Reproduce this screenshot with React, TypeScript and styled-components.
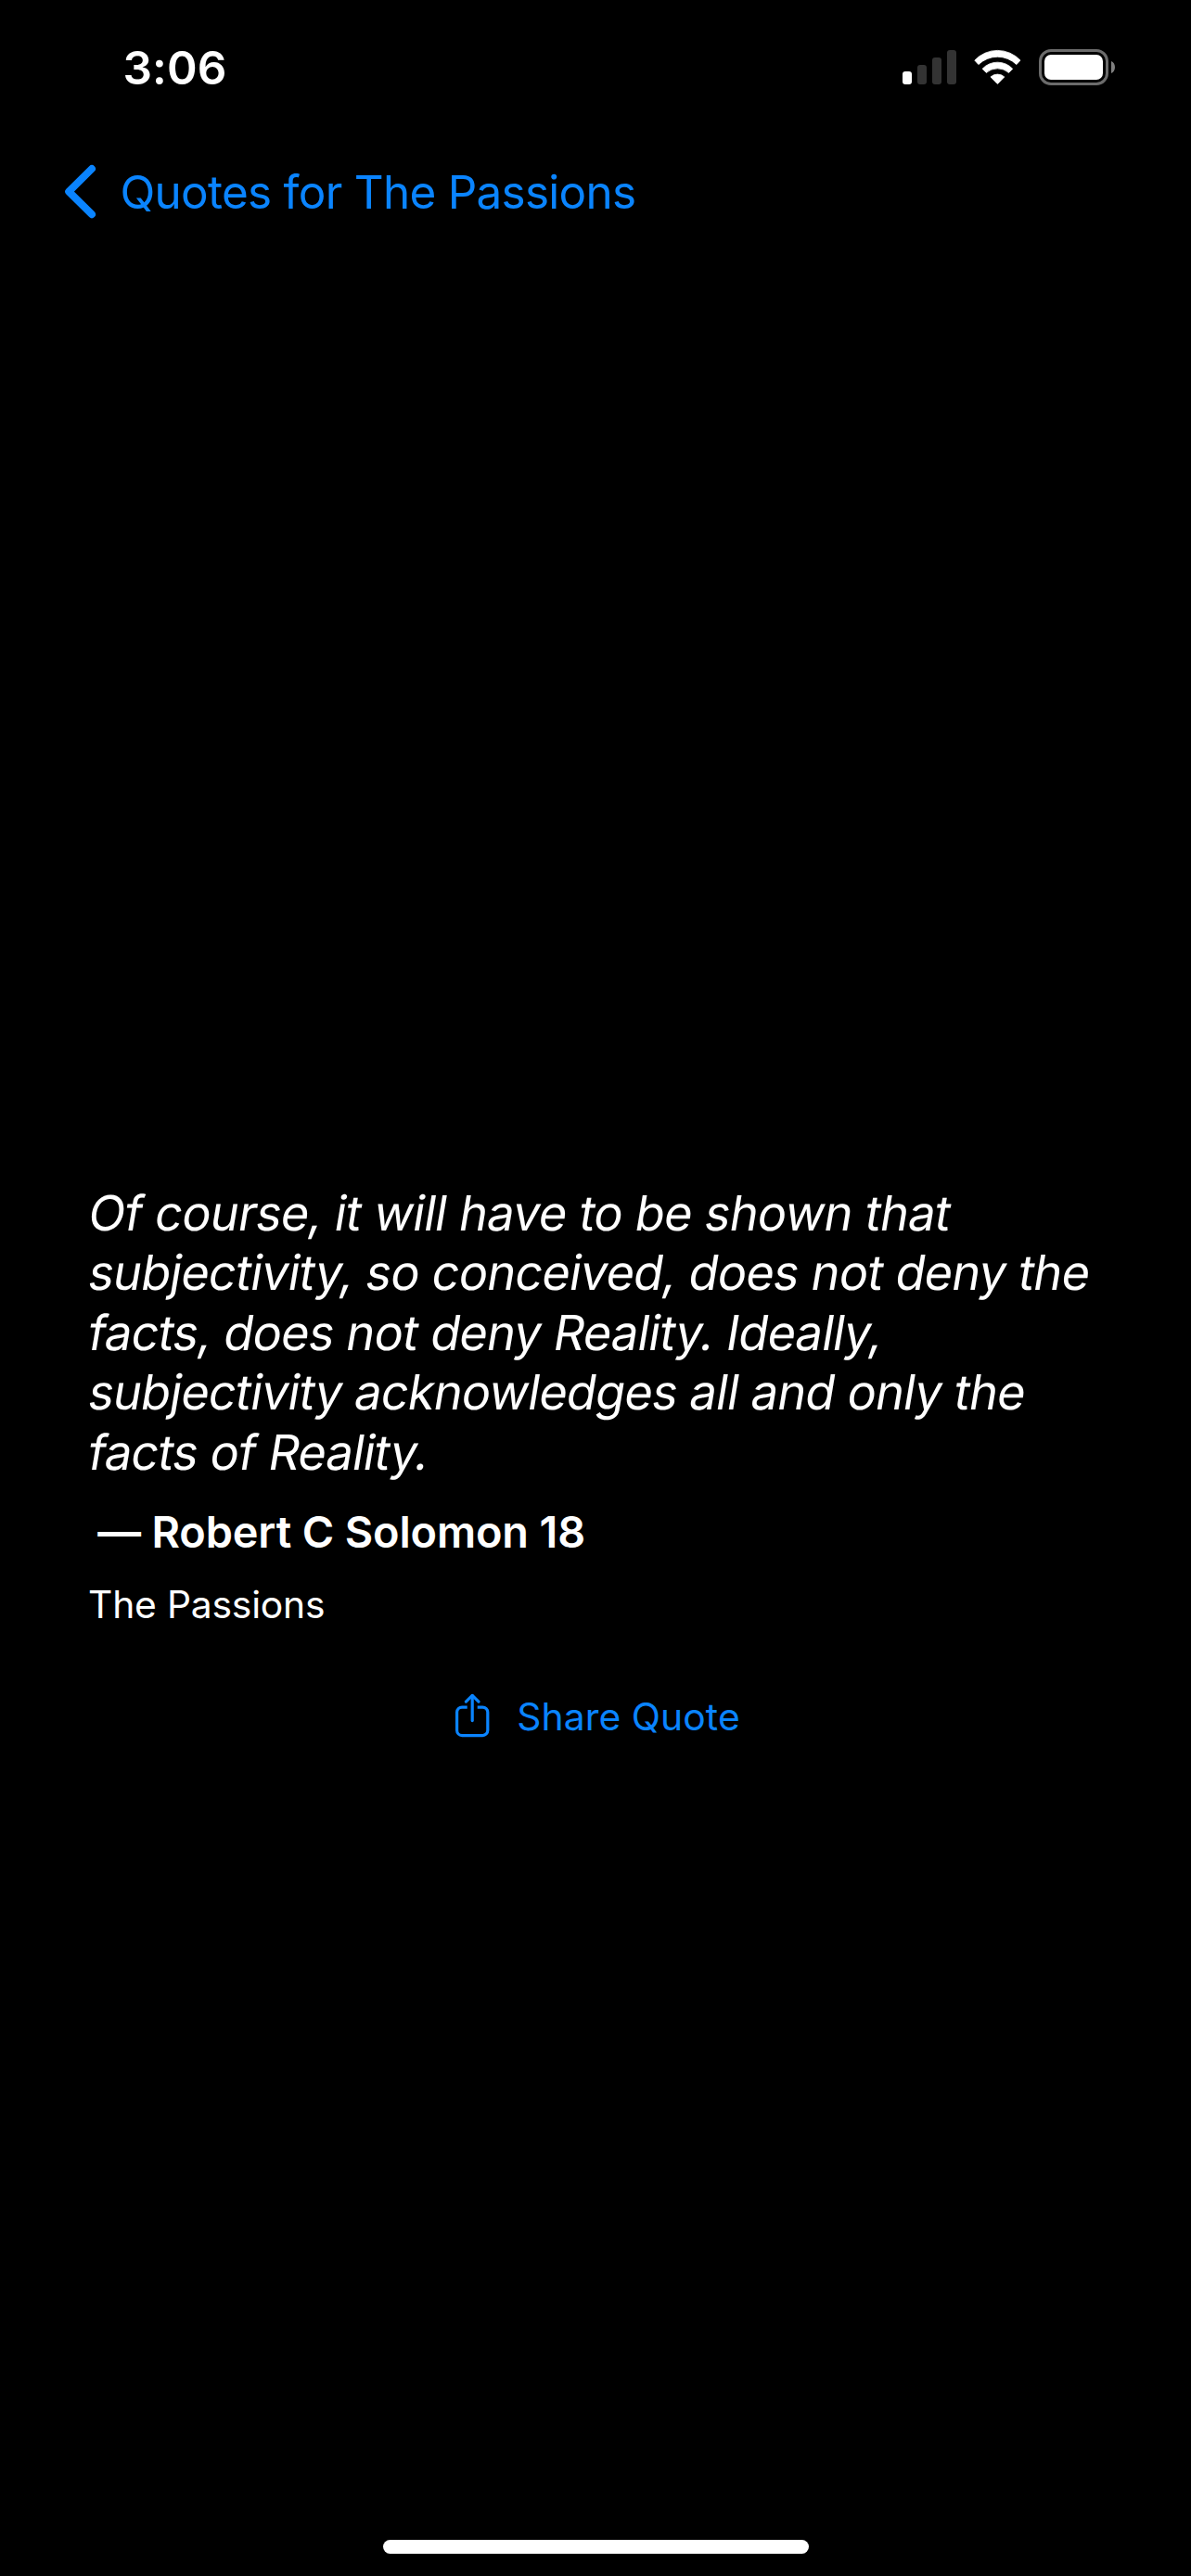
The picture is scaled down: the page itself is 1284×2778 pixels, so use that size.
import React from 'react';
import styled, { createGlobalStyle } from 'styled-components';

const BLUE = '#0a84ff';

const GlobalStyle = createGlobalStyle`
  body {
    margin: 0;
    background: #000;
    color: #fff;
    font-family: Inter, 'Liberation Sans', sans-serif;
  }
`;

const Screen = styled.div`
  display: flex;
  flex-direction: column;
  box-sizing: border-box;
  width: 1284px;
  height: 2778px;
  background: #000;
  overflow: hidden;
`;

const StatusBar = styled.header`
  display: flex;
  justify-content: space-between;
  align-items: flex-start;
  box-sizing: border-box;
  height: 141px;
  padding: 43px 82px 0 132.5px;
`;

const Clock = styled.time`
  font-size: 49.5px;
  font-weight: 600;
  line-height: 60px;
  letter-spacing: 0.1px;
`;

const StatusIcons = styled.div`
  display: flex;
  gap: 19px;
  padding-top: 10px;

  svg {
    display: block;
  }
`;

const NavBar = styled.nav`
  display: flex;
  align-items: flex-start;
  box-sizing: border-box;
  height: 123px;
  padding: 36px 69px 0;
`;

const BackButton = styled.button`
  display: flex;
  align-items: center;
  gap: 24.5px;
  padding: 0;
  border: 0;
  background: none;
  color: ${BLUE};
  font: 400 49.4px/60px Inter, 'Liberation Sans', sans-serif;
  letter-spacing: -0.7px;
  white-space: nowrap;
`;

const Content = styled.main`
  display: flex;
  flex: 1;
  flex-direction: column;
  padding: 1011.8px 93px 0;
`;

const Quote = styled.blockquote`
  margin: 0;
  font-size: 52.2px;
  line-height: 64.45px;
`;

/* Slanted roman letterforms: the family's own italic has different a and f shapes. */
const QuoteLine = styled.span<{ $tracking: number }>`
  display: block;
  width: max-content;
  letter-spacing: ${(p) => p.$tracking}px;
  transform: skewX(-9.5deg);
  transform-origin: 0 51px;
`;

const Author = styled.div`
  margin: 26px 0 0 12.2px;
  font-size: 46.8px;
  font-weight: 600;
  line-height: 56px;
  letter-spacing: -0.12px;
`;

const Source = styled.div`
  margin: 24.6px 0 0 2px;
  font-size: 40.8px;
  line-height: 50px;
  letter-spacing: -0.2px;
`;

const ShareButton = styled.button`
  display: flex;
  align-items: center;
  align-self: center;
  gap: 26px;
  margin-top: 71px;
  padding: 0;
  border: 0;
  background: none;
  color: ${BLUE};
  font: 400 40.8px/50px Inter, 'Liberation Sans', sans-serif;
  letter-spacing: 0.08px;
  white-space: nowrap;
`;

const Footer = styled.footer`
  display: flex;
  justify-content: center;
  padding: 0 0 24px 1px;
`;

const HomeIndicator = styled.div`
  width: 459px;
  height: 15px;
  border-radius: 8px;
  background: #fff;
`;

const Signal = () => (
  <svg width="58" height="40" viewBox="0 0 58 40">
    <rect x="0" y="24" width="10" height="14" rx="3" fill="#fff" />
    <rect x="16" y="17" width="10" height="21" rx="3" fill="#333" />
    <rect x="32" y="9" width="10" height="29" rx="3" fill="#333" />
    <rect x="48" y="1" width="10" height="37" rx="3" fill="#333" />
  </svg>
);

const Wifi = () => (
  <svg width="51" height="40" viewBox="0 0 51 40" fill="#fff" stroke="#fff" strokeWidth="0.8" strokeLinejoin="round">
    <path d="M0.8 12.1A33.6 33.6 0 0 1 50 12.1L45.9 16.6A29.4 29.4 0 0 0 4.9 16.6Z" />
    <path d="M9.1 21.2A22.4 22.4 0 0 1 41.7 21.2L37.5 25.4A18.4 18.4 0 0 0 13.3 25.4Z" />
    <path d="M18 29.9A11.2 11.2 0 0 1 32.8 29.9L25.9 37.1Q25.4 37.6 24.9 37.1Z" />
  </svg>
);

const Battery = () => (
  <svg width="82" height="40" viewBox="0 0 82 40">
    <rect x="1.5" y="1.5" width="72" height="36" rx="11.5" fill="none" stroke="#6b6b6b" strokeWidth="3" />
    <rect x="6" y="6" width="63" height="27" rx="7" fill="#fff" />
    <path d="M78 13C80.6 14.1 82 16.6 82 19.5S80.6 24.9 78 26Z" fill="#808080" />
  </svg>
);

const ChevronLeft = () => (
  <svg width="36" height="60" viewBox="0 0 36 60" fill="none" stroke="currentColor" strokeWidth="8" strokeLinecap="round" strokeLinejoin="round">
    <path d="M30 5L5.2 29.6L30 54.2" />
  </svg>
);

const ShareIcon = () => (
  <svg width="45" height="50" viewBox="0 0 45 50" fill="none" stroke="currentColor" strokeWidth="3.2" strokeLinecap="round" strokeLinejoin="round">
    <path d="M17.7 15.1H12.1A5.5 5.5 0 0 0 6.6 20.6V40.1A5.5 5.5 0 0 0 12.1 45.6H34.3A5.5 5.5 0 0 0 39.8 40.1V20.6A5.5 5.5 0 0 0 34.3 15.1H28.7" strokeLinecap="butt" />
    <path d="M23.2 2.6V29.6" />
    <path d="M16.4 9.1L23.2 2.4L30 9.1" />
  </svg>
);

const quoteLines = [
  { text: 'Of course, it will have to be shown that', tracking: -0.69 },
  { text: 'subjectivity, so conceived, does not deny the', tracking: -0.76 },
  { text: 'facts, does not deny Reality. Ideally,', tracking: -0.77 },
  { text: 'subjectivity acknowledges all and only the', tracking: -0.77 },
  { text: 'facts of Reality.', tracking: -0.84 },
];

export default function App() {
  return (
    <>
      <GlobalStyle />
      <Screen>
        <StatusBar>
          <Clock>3:06</Clock>
          <StatusIcons>
            <Signal />
            <Wifi />
            <Battery />
          </StatusIcons>
        </StatusBar>
        <NavBar>
          <BackButton>
            <ChevronLeft />
            Quotes for The Passions
          </BackButton>
        </NavBar>
        <Content>
          <Quote>
            {quoteLines.map((line) => (
              <QuoteLine key={line.text} $tracking={line.tracking}>
                {line.text}
              </QuoteLine>
            ))}
          </Quote>
          <Author>— Robert C Solomon 18</Author>
          <Source>The Passions</Source>
          <ShareButton>
            <ShareIcon />
            Share Quote
          </ShareButton>
        </Content>
        <Footer>
          <HomeIndicator />
        </Footer>
      </Screen>
    </>
  );
}
